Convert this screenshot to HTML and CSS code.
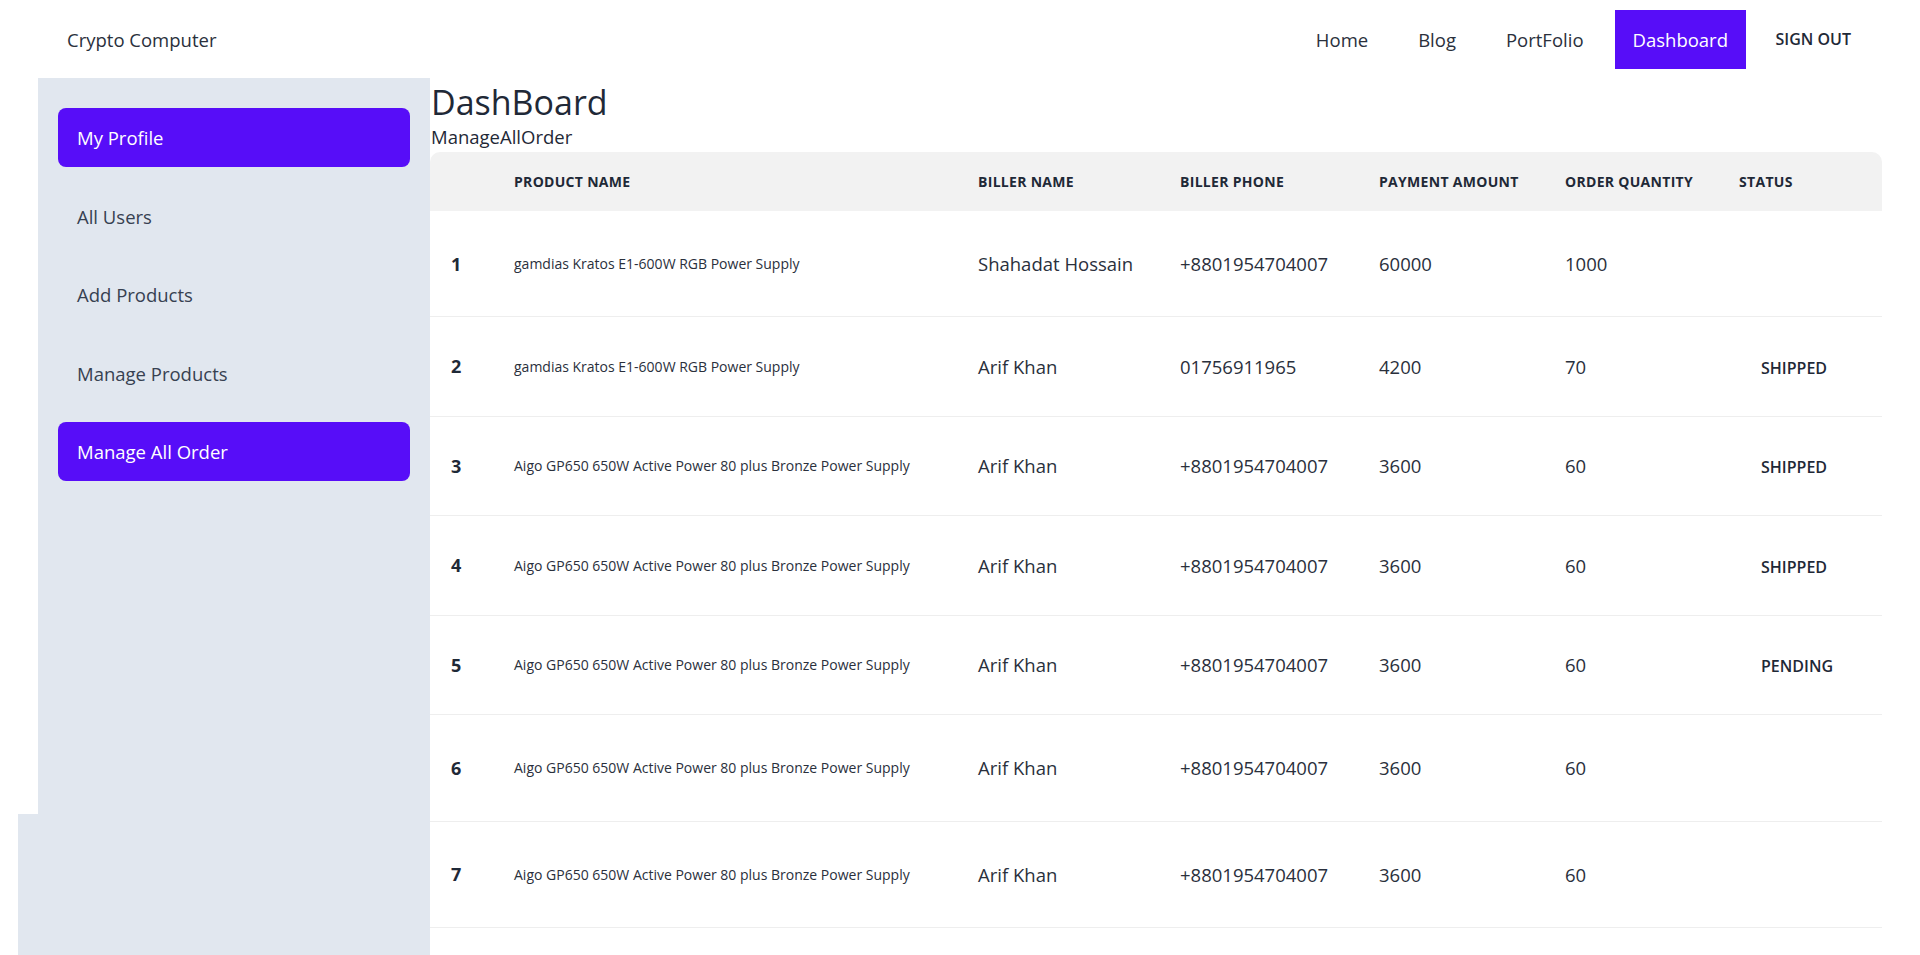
FILE: index.html
```html
<!DOCTYPE html>
<html lang="en">
<head>
<meta charset="utf-8">
<title>Crypto Computer - Dashboard</title>
<link rel="stylesheet" href="styles.css">
</head>
<body>
<header class="navbar">
  <a class="brand" href="#">Crypto Computer</a>
  <nav class="nav-links">
    <a class="nav-link" href="#">Home</a>
    <a class="nav-link" href="#">Blog</a>
    <a class="nav-link" href="#">PortFolio</a>
    <a class="nav-link active" href="#">Dashboard</a>
    <a class="nav-link signout" href="#">SIGN OUT</a>
  </nav>
</header>
<div class="layout">
  <aside class="sidebar">
    <ul class="menu">
      <li><a class="menu-item active" href="#">My Profile</a></li>
      <li><a class="menu-item" href="#">All Users</a></li>
      <li><a class="menu-item" href="#">Add Products</a></li>
      <li><a class="menu-item" href="#">Manage Products</a></li>
      <li><a class="menu-item active" href="#">Manage All Order</a></li>
    </ul>
    <div class="sidebar-foot"></div>
  </aside>
  <main class="content">
    <h1 class="title">DashBoard</h1>
    <p class="subtitle">ManageAllOrder</p>
    <table class="orders">
      <colgroup>
        <col class="c-num"><col class="c-prod"><col class="c-name"><col class="c-phone"><col class="c-pay"><col class="c-qty"><col class="c-status">
      </colgroup>
      <thead>
        <tr><th></th><th>Product Name</th><th>Biller Name</th><th>Biller Phone</th><th>Payment Amount</th><th>Order Quantity</th><th>Status</th></tr>
      </thead>
      <tbody>
        <tr class="tall first"><th>1</th><td class="prod">gamdias Kratos E1-600W RGB Power Supply</td><td>Shahadat Hossain</td><td>+8801954704007</td><td>60000</td><td>1000</td><td></td></tr>
        <tr><th>2</th><td class="prod">gamdias Kratos E1-600W RGB Power Supply</td><td>Arif Khan</td><td>01756911965</td><td>4200</td><td>70</td><td><span class="status">Shipped</span></td></tr>
        <tr><th>3</th><td class="prod">Aigo GP650 650W Active Power 80 plus Bronze Power Supply</td><td>Arif Khan</td><td>+8801954704007</td><td>3600</td><td>60</td><td><span class="status">Shipped</span></td></tr>
        <tr><th>4</th><td class="prod">Aigo GP650 650W Active Power 80 plus Bronze Power Supply</td><td>Arif Khan</td><td>+8801954704007</td><td>3600</td><td>60</td><td><span class="status">Shipped</span></td></tr>
        <tr><th>5</th><td class="prod">Aigo GP650 650W Active Power 80 plus Bronze Power Supply</td><td>Arif Khan</td><td>+8801954704007</td><td>3600</td><td>60</td><td><span class="status">Pending</span></td></tr>
        <tr class="tall"><th>6</th><td class="prod">Aigo GP650 650W Active Power 80 plus Bronze Power Supply</td><td>Arif Khan</td><td>+8801954704007</td><td>3600</td><td>60</td><td></td></tr>
        <tr class="tall"><th>7</th><td class="prod">Aigo GP650 650W Active Power 80 plus Bronze Power Supply</td><td>Arif Khan</td><td>+8801954704007</td><td>3600</td><td>60</td><td></td></tr>
      </tbody>
    </table>
  </main>
</div>
</body>
</html>
```
FILE: styles.css
```css
* { box-sizing: border-box; }
html, body { margin: 0; padding: 0; }
body {
  font-family: "Open Sans", "Noto Sans", "Liberation Sans", sans-serif;
  color: #1f2937;
  background: #ffffff;
}
a { text-decoration: none; color: inherit; }

/* Navbar */
.navbar {
  display: flex;
  justify-content: space-between;
  align-items: center;
  height: 78px;
  padding: 0 50px 0 48px;
}
.brand {
  font-size: 18.5px;
  padding: 0 19px;
  color: #2a303c;
}
.nav-links {
  display: flex;
  align-items: center;
  gap: 12px;
}
.nav-link {
  display: flex;
  align-items: center;
  height: 59px;
  padding: 0 19px;
  font-size: 18.5px;
  color: #2a303c;
}
.nav-link.active {
  background: #570df8;
  color: #ffffff;
  padding: 0 18px;
}
.nav-link.signout {
  font-size: 16px;
  font-weight: 600;
  color: #1f2937;
  margin-left: -1.5px;
}

/* Layout */
.layout {
  display: grid;
  grid-template-columns: 392px 1fr;
  padding: 0 38px;
  align-items: stretch;
}
.sidebar {
  display: flex;
  flex-direction: column;
}
.menu {
  list-style: none;
  margin: 0;
  padding: 30px 20px 0 20px;
  height: 736px;
  background: #e1e7ef;
  display: flex;
  flex-direction: column;
  gap: 19.5px;
}
.menu-item {
  display: flex;
  align-items: center;
  height: 59px;
  padding: 0 19px;
  border-radius: 8px;
  font-size: 18.5px;
  color: #374151;
}
.menu-item.active {
  background: #570df8;
  color: #ffffff;
}
.sidebar-foot {
  flex: 1;
  min-height: 141px;
  margin-left: -20px;
  background: #e1e7ef;
}

/* Content */
.content { min-width: 0; }
.title {
  margin: 4px 0 0 1px;
  font-size: 34px;
  line-height: 40px;
  font-weight: 400;
  color: #1f2937;
}
.subtitle {
  margin: 1px 0 1px 1px;
  font-size: 18.5px;
  line-height: 28px;
  color: #1f2937;
}

.orders {
  width: 100%;
  table-layout: fixed;
  border-collapse: separate;
  border-spacing: 0;
}
.c-num { width: 63px; }
.c-prod { width: 464px; }
.c-name { width: 202px; }
.c-phone { width: 199px; }
.c-pay { width: 186px; }
.c-qty { width: 174px; }
.c-status { width: 164px; }

.orders thead th {
  background: #f2f2f2;
  height: 59px;
  padding: 0 0 0 21px;
  text-align: left;
  font-size: 14px;
  font-weight: 700;
  letter-spacing: 0.3px;
  text-transform: uppercase;
  color: #1f2937;
}
.orders thead th:first-child { border-top-left-radius: 10px; }
.orders thead th:last-child { border-top-right-radius: 10px; }

.orders tbody tr { height: 99.5px; }
.orders tbody tr.tall { height: 106.5px; }
.orders tbody tr.first { height: 106px; }
.orders tbody th,
.orders tbody td {
  padding: 0 0 0 21px;
  text-align: left;
  vertical-align: middle;
  border-bottom: 1px solid #eeeeee;
  font-size: 18.5px;
  font-weight: 400;
  color: #2a303c;
  white-space: nowrap;
}
.orders tbody th {
  font-weight: 700;
  font-size: 18px;
  color: #1f2937;
}
.orders tbody td.prod {
  font-size: 14px;
  color: #2a303c;
}
.status {
  display: inline-block;
  padding-left: 22px;
  font-size: 16px;
  font-weight: 600;
  text-transform: uppercase;
  color: #1f2937;
}
```
